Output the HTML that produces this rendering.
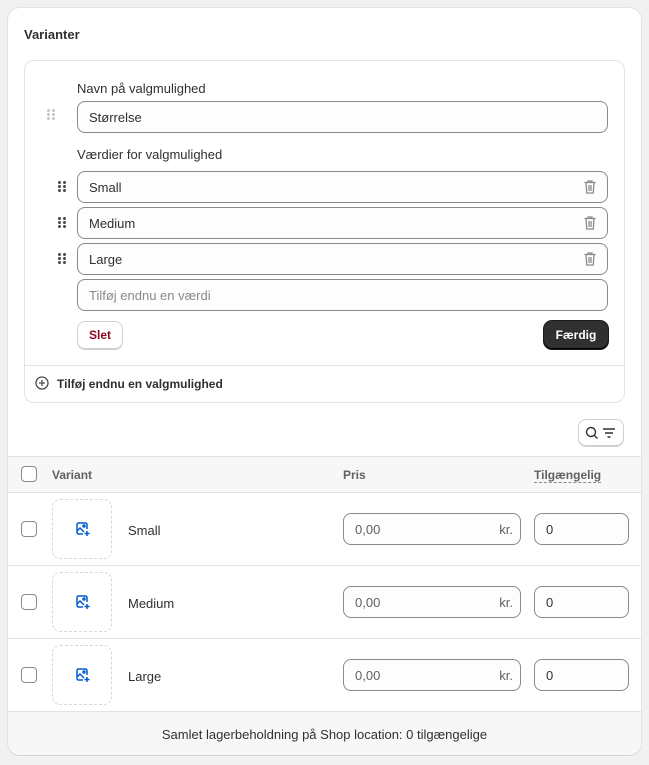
<!DOCTYPE html>
<html><head><meta charset="utf-8"><style>
*{box-sizing:border-box;margin:0;padding:0}
body{width:649px;height:765px;background:#f1f1f1;font-family:"Liberation Sans",sans-serif;font-size:13px;color:#303030;position:relative;overflow:hidden}
.card{position:absolute;left:8px;top:8px;width:633px;height:747px;background:#fff;border-radius:12px;box-shadow:0 1px 0 #d4d4d4,0 0 0 1px #e3e3e3;overflow:hidden}
.abs{position:absolute}
.inp{position:absolute;border:1px solid #8a8a8a;border-radius:8px;background:#fdfdfd;height:32px;line-height:31px;padding-left:11px;font-size:13px;color:#303030}
.grip{position:absolute;width:8px;height:12px}
.grip i{position:absolute;width:3px;height:3px;border-radius:50%;background:#4a4a4a}
.cb{position:absolute;width:16px;height:16px;border:1px solid #8a8a8a;border-radius:4px;background:#fff}
.line{position:absolute;left:0;width:633px;height:1px;background:#e3e3e3}
.img{position:absolute;left:44px;width:60px;height:60px;border:1px dashed #d8d8d8;border-radius:8px}
</style></head><body>
<div class="card">
<div class="abs" style="left:16px;top:19px;font-weight:bold;font-size:13px">Varianter</div>
<div class="abs" style="left:16px;top:52px;width:601px;height:343px;border:1px solid #e3e3e3;border-radius:10px"></div>
<div class="abs" style="left:69px;top:73px">Navn på valgmulighed</div>
<div class="grip" style="left:39px;top:101px"><i style="left:0;top:0;background:#c4c4c4"></i><i style="left:5px;top:0;background:#c4c4c4"></i><i style="left:0;top:4px;background:#c4c4c4"></i><i style="left:5px;top:4px;background:#c4c4c4"></i><i style="left:0;top:8px;background:#c4c4c4"></i><i style="left:5px;top:8px;background:#c4c4c4"></i></div>
<div class="inp" style="left:69px;top:93px;width:531px">Størrelse</div>
<div class="abs" style="left:69px;top:139px">Værdier for valgmulighed</div>
<div class="grip" style="left:50px;top:173px"><i style="left:0;top:0"></i><i style="left:5px;top:0"></i><i style="left:0;top:4px"></i><i style="left:5px;top:4px"></i><i style="left:0;top:8px"></i><i style="left:5px;top:8px"></i></div>
<div class="inp" style="left:69px;top:163px;width:531px">Small</div>
<div class="grip" style="left:50px;top:209px"><i style="left:0;top:0"></i><i style="left:5px;top:0"></i><i style="left:0;top:4px"></i><i style="left:5px;top:4px"></i><i style="left:0;top:8px"></i><i style="left:5px;top:8px"></i></div>
<div class="inp" style="left:69px;top:199px;width:531px">Medium</div>
<div class="grip" style="left:50px;top:245px"><i style="left:0;top:0"></i><i style="left:5px;top:0"></i><i style="left:0;top:4px"></i><i style="left:5px;top:4px"></i><i style="left:0;top:8px"></i><i style="left:5px;top:8px"></i></div>
<div class="inp" style="left:69px;top:235px;width:531px">Large</div>
<svg class="abs" style="left:575px;top:171px" width="14" height="16" viewBox="0 0 14 16" fill="none" stroke="#8a8a8a" stroke-width="1.3"><path d="M1.5 3.5h11M5 3.5V2h4v1.5M3 3.5l.7 10.5h6.6L11 3.5M6 6v6M8 6v6"/></svg>
<svg class="abs" style="left:575px;top:207px" width="14" height="16" viewBox="0 0 14 16" fill="none" stroke="#8a8a8a" stroke-width="1.3"><path d="M1.5 3.5h11M5 3.5V2h4v1.5M3 3.5l.7 10.5h6.6L11 3.5M6 6v6M8 6v6"/></svg>
<svg class="abs" style="left:575px;top:243px" width="14" height="16" viewBox="0 0 14 16" fill="none" stroke="#8a8a8a" stroke-width="1.3"><path d="M1.5 3.5h11M5 3.5V2h4v1.5M3 3.5l.7 10.5h6.6L11 3.5M6 6v6M8 6v6"/></svg>
<div class="inp" style="left:69px;top:271px;width:531px;color:#8a8a8a">Tilføj endnu en værdi</div>
<div class="abs" style="left:69px;top:313px;width:46px;height:28px;border:1px solid #d0d0d0;border-radius:8px;box-shadow:0 1px 0 #d0d0d0;color:#8e0b21;font-weight:bold;font-size:12px;text-align:center;line-height:27px">Slet</div>
<div class="abs" style="left:536px;top:313px;width:64px;height:28px;background:#303030;border-radius:8px;color:#fff;font-weight:bold;font-size:12px;text-align:center;line-height:28px;box-shadow:inset 0 -1px 0 #000,0 0 0 1px #1a1a1a">Færdig</div>
<div class="abs" style="left:17px;top:357px;width:599px;height:1px;background:#e3e3e3"></div>
<svg class="abs" style="left:27px;top:368px" width="14" height="14" viewBox="0 0 14 14" fill="none" stroke="#4a4a4a" stroke-width="1.3"><circle cx="7" cy="7" r="6"/><path d="M7 4v6M4 7h6"/></svg>
<div class="abs" style="left:49px;top:369px;font-weight:bold;font-size:12px">Tilføj endnu en valgmulighed</div>
<div class="abs" style="left:570px;top:411px;width:46px;height:27px;border:1px solid #d0d0d0;border-radius:8px;box-shadow:0 1px 0 #d0d0d0"></div>
<svg class="abs" style="left:576px;top:417px" width="36" height="16" viewBox="0 0 36 16" fill="none" stroke="#303030" stroke-width="1.4"><circle cx="7" cy="7" r="4.5"/><path d="M10.5 10.5l3 3M19 4h12M21 8h8M23.5 12h3"/></svg>
<div class="line" style="top:448px"></div>
<div class="abs" style="left:0;top:449px;width:633px;height:35px;background:#f7f7f7"></div>
<div class="line" style="top:484px"></div>
<div class="cb" style="left:13px;top:458px"></div>
<div class="abs" style="left:44px;top:460px;color:#616161;font-weight:bold;font-size:12px">Variant</div>
<div class="abs" style="left:335px;top:460px;color:#616161;font-weight:bold;font-size:12px">Pris</div>
<div class="abs" style="left:526px;top:460px;color:#616161;font-weight:bold;font-size:12px;border-bottom:1px dashed #8a8a8a;line-height:14px">Tilgængelig</div>

<div class="cb" style="left:13px;top:513px"></div>
<div class="img" style="top:491px"></div>
<div class="abs" style="left:120px;top:515px">Small</div>
<div class="inp" style="left:335px;top:505px;width:178px;color:#616161">0,00<span style="position:absolute;right:7px;color:#616161">kr.</span></div>
<div class="inp" style="left:526px;top:505px;width:95px">0</div>
<div class="line" style="top:557px"></div>

<div class="cb" style="left:13px;top:586px"></div>
<div class="img" style="top:564px"></div>
<div class="abs" style="left:120px;top:588px">Medium</div>
<div class="inp" style="left:335px;top:578px;width:178px;color:#616161">0,00<span style="position:absolute;right:7px;color:#616161">kr.</span></div>
<div class="inp" style="left:526px;top:578px;width:95px">0</div>
<div class="line" style="top:630px"></div>

<div class="cb" style="left:13px;top:659px"></div>
<div class="img" style="top:637px"></div>
<div class="abs" style="left:120px;top:661px">Large</div>
<div class="inp" style="left:335px;top:651px;width:178px;color:#616161">0,00<span style="position:absolute;right:7px;color:#616161">kr.</span></div>
<div class="inp" style="left:526px;top:651px;width:95px">0</div>

<svg class="abs" style="left:67px;top:513px" width="15" height="16" viewBox="0 0 15 16" fill="none" stroke="#005bd3" stroke-width="1.5"><path d="M8 13H3.5A1.5 1.5 0 0 1 2 11.5v-8A1.5 1.5 0 0 1 3.5 2h7A1.5 1.5 0 0 1 12 3.5V8M2 10l3-3 4 4M12 10v5M9.5 12.5h5"/><circle cx="9" cy="5" r="1"/></svg>
<svg class="abs" style="left:67px;top:586px" width="15" height="16" viewBox="0 0 15 16" fill="none" stroke="#005bd3" stroke-width="1.5"><path d="M8 13H3.5A1.5 1.5 0 0 1 2 11.5v-8A1.5 1.5 0 0 1 3.5 2h7A1.5 1.5 0 0 1 12 3.5V8M2 10l3-3 4 4M12 10v5M9.5 12.5h5"/><circle cx="9" cy="5" r="1"/></svg>
<svg class="abs" style="left:67px;top:659px" width="15" height="16" viewBox="0 0 15 16" fill="none" stroke="#005bd3" stroke-width="1.5"><path d="M8 13H3.5A1.5 1.5 0 0 1 2 11.5v-8A1.5 1.5 0 0 1 3.5 2h7A1.5 1.5 0 0 1 12 3.5V8M2 10l3-3 4 4M12 10v5M9.5 12.5h5"/><circle cx="9" cy="5" r="1"/></svg>

<div class="line" style="top:703px"></div>
<div class="abs" style="left:0;top:704px;width:633px;height:43px;background:#f7f7f7;text-align:center;line-height:45px">Samlet lagerbeholdning på Shop location: 0 tilgængelige</div>
</div>
</body></html>
